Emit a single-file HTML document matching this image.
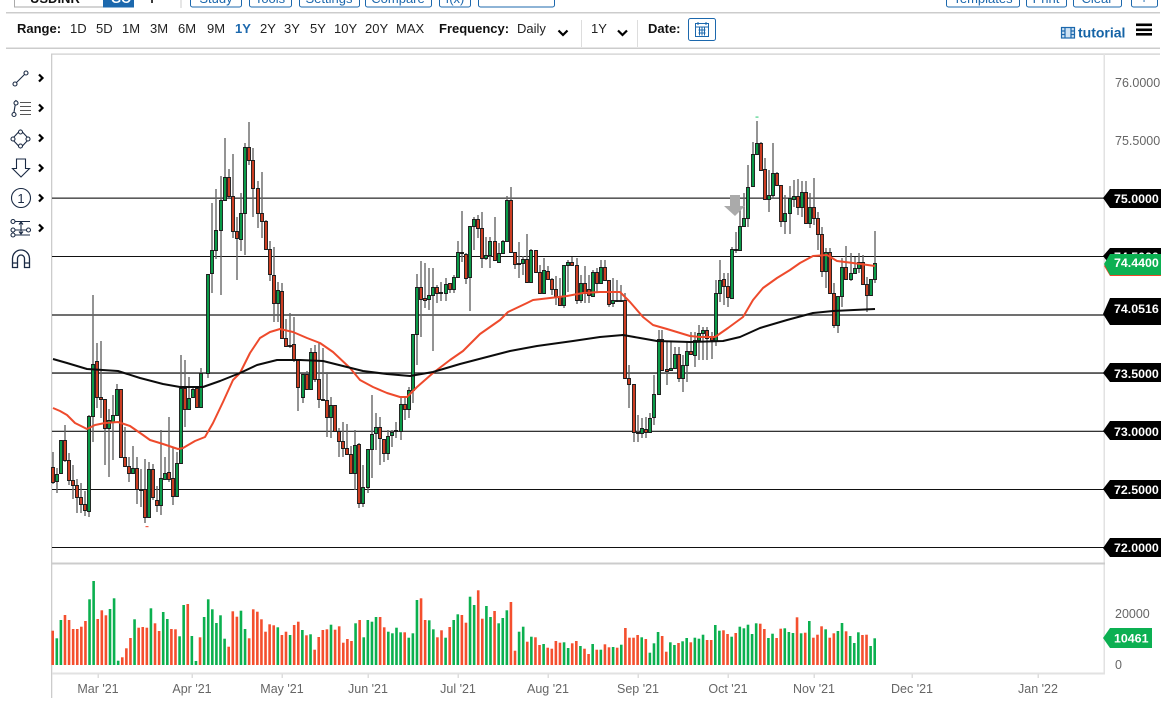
<!DOCTYPE html>
<html><head><meta charset="utf-8"><title>USDINR chart</title>
<style>
html,body{margin:0;padding:0;background:#fff;width:1173px;height:704px;overflow:hidden}
svg{position:absolute;left:0;top:0;display:block}
text{font-family:"Liberation Sans",Arial,sans-serif}
.t{font-size:13px;fill:#222}
.b{font-size:13px;font-weight:bold;fill:#111}
.tb{font-size:12.4px;font-weight:bold;fill:#fff}
.g{font-size:12.5px;fill:#666}
.btn{fill:#fff;stroke:#1c68ad;stroke-width:1}
.bt{font-size:13px;fill:#1c68ad}
.ic{fill:none;stroke:#1a2a44;stroke-width:1.1}
.ci{fill:#fff;stroke:#1a2a44;stroke-width:1.1}
.ch{fill:none;stroke:#000;stroke-width:2.2}
#cd,#ma{filter:blur(.35px)}
#vol{filter:blur(.2px)}
</style></head><body>
<svg width="1173" height="704" viewBox="0 0 1173 704" xmlns="http://www.w3.org/2000/svg">
<!-- top bar -->
<rect x="14.5" y="-10" width="89" height="17" class="btn" style="stroke:#aaa"/>
<text x="30" y="3" class="b">USDINR</text>
<rect x="103" y="-10" width="31" height="17.5" fill="#1c68ad"/>
<text x="111" y="3" style="font-size:13px;font-weight:bold;fill:#fff">GO</text>
<text x="152" y="4" text-anchor="middle" class="b" style="font-size:15px">+</text>
<rect x="180.5" y="-8" width="1" height="16" fill="#ccc"/>
<rect x="190.5" y="-10" width="51" height="17" rx="2" class="btn"/><text x="216" y="3" text-anchor="middle" class="bt">Study</text>
<rect x="249.5" y="-10" width="42" height="17" rx="2" class="btn"/><text x="270" y="3" text-anchor="middle" class="bt">Tools</text>
<rect x="299.5" y="-10" width="60" height="17" rx="2" class="btn"/><text x="329" y="3" text-anchor="middle" class="bt">Settings</text>
<rect x="365.5" y="-10" width="66" height="17" rx="2" class="btn"/><text x="398" y="3" text-anchor="middle" class="bt">Compare</text>
<rect x="439.5" y="-10" width="31" height="17" rx="2" class="btn"/><text x="455" y="3" text-anchor="middle" class="bt">f(x)</text>
<rect x="478.5" y="-10" width="76" height="17" rx="2" class="btn"/>
<rect x="946.5" y="-10" width="73" height="17" rx="2" class="btn"/><text x="983" y="3" text-anchor="middle" class="bt">Templates</text>
<rect x="1026.5" y="-10" width="40" height="17" rx="2" class="btn"/><text x="1046" y="3" text-anchor="middle" class="bt">Print</text>
<rect x="1073.5" y="-10" width="48" height="17" rx="2" class="btn"/><text x="1097" y="3" text-anchor="middle" class="bt">Clear</text>
<rect x="1131.5" y="-10" width="26" height="17" rx="2" class="btn"/><text x="1144" y="3" text-anchor="middle" class="bt">+</text>
<rect x="6" y="12" width="1154" height="1.5" fill="#ccc"/>
<rect x="6" y="47.5" width="1154" height="1.5" fill="#ccc"/>
<rect x="51" y="53.5" width="1109" height="1.2" fill="#ccc"/>
<!-- range row -->
<text x="17" y="33" class="b">Range:</text>
<text x="70" y="33" class="t">1D</text><text x="96" y="33" class="t">5D</text><text x="122" y="33" class="t">1M</text>
<text x="150" y="33" class="t">3M</text><text x="178" y="33" class="t">6M</text><text x="207" y="33" class="t">9M</text>
<text x="235" y="33" class="t" style="font-weight:bold;fill:#1c68ad">1Y</text>
<text x="260" y="33" class="t">2Y</text><text x="284" y="33" class="t">3Y</text><text x="310" y="33" class="t">5Y</text>
<text x="334" y="33" class="t">10Y</text><text x="365" y="33" class="t">20Y</text><text x="396" y="33" class="t">MAX</text>
<text x="439" y="33" class="b">Frequency:</text><text x="517" y="33" class="t">Daily</text>
<path d="M558.5 30.5l4.5 4.5 4.5-4.5" class="ch"/>
<rect x="581" y="20" width="1" height="27" fill="#ddd"/>
<text x="591" y="33" class="t">1Y</text>
<path d="M618 30.5l4.5 4.5 4.5-4.5" class="ch"/>
<rect x="637" y="20" width="1" height="27" fill="#ddd"/>
<text x="648" y="33" class="b">Date:</text>
<rect x="688.5" y="18.5" width="27" height="22" rx="2" class="btn"/>
<g fill="none" stroke="#1c68ad" stroke-width="1"><rect x="695.5" y="23.5" width="13" height="13"/><path d="M695.5 27h13M698 22v3M706 22v3M698.5 30h7M698.5 33h7M699.5 27.5v8M702 27.5v8M704.5 27.5v8"/></g>
<!-- tutorial -->
<g fill="none" stroke="#1c68ad" stroke-width="1.2"><rect x="1061.5" y="27.5" width="13" height="10.5" fill="#cfe3f4"/><path d="M1065 27.5v10.5M1071 27.5v10.5M1061.5 31h3.5M1061.5 34.5h3.5M1071 31h3.5M1071 34.5h3.5"/></g>
<text x="1078" y="37.500" style="font-size:14px;font-weight:bold;fill:#1463a6">tutorial</text>
<rect x="1136" y="23.500" width="16" height="2.600" fill="#000"/><rect x="1136" y="28.500" width="16" height="2.600" fill="#000"/><rect x="1136" y="33" width="16" height="2.600" fill="#000"/>
<!-- frame -->
<rect x="51" y="54" width="1.3" height="644" fill="#ccc"/>
<rect x="1103.5" y="54" width="1.5" height="620" fill="#e2e2e2"/>
<rect x="52" y="562.5" width="1053" height="2" fill="#ccc"/>
<rect x="52" y="672.5" width="1053" height="2" fill="#e2e2e2"/>
<!-- grid -->
<g fill="#333">
<rect x="52" y="197.5" width="1052" height="1.3"/><rect x="52" y="256" width="1052" height="1" fill="#111"/>
<rect x="52" y="314.3" width="1052" height="1.4"/><rect x="52" y="372.3" width="1052" height="1.5"/>
<rect x="52" y="430.7" width="1052" height="1.3"/><rect x="52" y="489" width="1052" height="1" fill="#111"/>
<rect x="52" y="547" width="1052" height="1" fill="#111"/></g>
<g id="cd"></g>
<g id="vol"></g>
<g id="ma">
<polyline fill="none" stroke="#ee4a2c" stroke-width="2" stroke-linejoin="round" points="53,408 60,411 67,415 75,423 87,429 95,425 105,423 118,422 130,426 143,435 150,440 163,444 178,449 183,448 195,441 205,437 213,423 223,402 233,380 240,373 250,353 260,338 270,332 280,329 293,332 307,338 320,343 333,352 350,368 360,380 373,387 387,393 400,397 407,397 417,387 433,373 450,360 463,351 480,334 500,320 508,312 527,303 533,300 550,298 567,296 583,293 600,292 620,292 630,302 643,317 653,325 667,329 690,336 700,337 715,337 728,328 743,317 753,300 763,288 777,278 790,270 800,263 813,256 827,255 837,261 853,263 875,266"/>
<polyline fill="none" stroke="#0c0c0c" stroke-width="2" stroke-linejoin="round" points="53,359 67,363 87,369 118,371 140,378 163,384 180,387 203,387 220,381 240,373 257,365 277,360 300,360 323,361 343,366 363,371 387,374 410,376 433,372 460,364 483,358 510,351 537,346 573,341 600,337 623,335 640,338 657,341 690,342 723,341 740,337 760,328 787,320 813,313 833,311 875,309"/>
<polygon points="730,195 740,195 740,206 745,206 735,216 724,206 730,206" fill="#aaa"/>
</g>
<rect x="755.5" y="116.5" width="3" height="1.2" fill="#4bd28a"/><rect x="145.5" y="526" width="3" height="1.2" fill="#f0604a"/>
<!-- ticks & x labels -->
<g fill="#ddd"><rect x="97.5" y="674" width="1.5" height="4"/><rect x="191.5" y="674" width="1.5" height="4"/><rect x="281.5" y="674" width="1.5" height="4"/><rect x="367.5" y="674" width="1.5" height="4"/><rect x="457.5" y="674" width="1.5" height="4"/><rect x="547.5" y="674" width="1.5" height="4"/><rect x="637.5" y="674" width="1.5" height="4"/><rect x="727.5" y="674" width="1.5" height="4"/><rect x="813.5" y="674" width="1.5" height="4"/><rect x="911.5" y="674" width="1.5" height="4"/><rect x="1037.5" y="674" width="1.5" height="4"/></g>
<g text-anchor="middle">
<text x="98" y="693" class="g">Mar '21</text><text x="192" y="693" class="g">Apr '21</text><text x="282" y="693" class="g">May '21</text><text x="368" y="693" class="g">Jun '21</text><text x="458" y="693" class="g">Jul '21</text><text x="548" y="693" class="g">Aug '21</text><text x="638" y="693" class="g">Sep '21</text><text x="728" y="693" class="g">Oct '21</text><text x="814" y="693" class="g">Nov '21</text><text x="912" y="693" class="g">Dec '21</text><text x="1038" y="693" class="g">Jan '22</text>
</g>
<!-- right axis -->
<text x="1115" y="87" class="g">76.0000</text><text x="1115" y="145" class="g">75.5000</text>
<g fill="#000">
<polygon points="1103,198 1110,189 1161,189 1161,208 1110,208"/>
<polygon points="1103,256 1110,248 1161,248 1161,265 1110,265"/>
<polygon points="1103,314 1110,298 1161,298 1161,325 1110,325"/>
<polygon points="1103,373 1110,363 1161,363 1161,382 1110,382"/>
<polygon points="1103,431 1110,421 1161,421 1161,440 1110,440"/>
<polygon points="1103,489 1110,480 1161,480 1161,499 1110,499"/>
<polygon points="1103,548 1110,538 1161,538 1161,557 1110,557"/></g>
<text x="1114" y="261" class="tb">74.5000</text>
<polygon points="1104,266 1110,257 1161,257 1161,276 1110,276" fill="#f0492b"/>
<polygon points="1104,264 1110,254 1161,254 1161,275 1110,275" fill="#0cb052"/>
<text x="1114" y="203" class="tb">75.0000</text>
<text x="1114" y="267" class="tb">74.4400</text>
<text x="1114" y="313" class="tb">74.0516</text>
<text x="1114" y="378" class="tb">73.5000</text>
<text x="1114" y="436" class="tb">73.0000</text>
<text x="1114" y="494" class="tb">72.5000</text>
<text x="1114" y="552" class="tb">72.0000</text>
<text x="1115" y="618" class="g">20000</text><text x="1115" y="669" class="g">0</text>
<polygon points="1103,638 1110,628 1152,628 1152,648 1110,648" fill="#0cb052"/>
<text x="1114" y="642.5" class="tb">10461</text>
<!-- left tools -->
<path d="M16.5 82.5L24.5 74.5" class="ic"/><circle cx="15" cy="84" r="2" class="ci"/><circle cx="26" cy="73" r="2" class="ci"/>
<path d="M16 100L14 112" class="ic"/><circle cx="16" cy="103" r="2" class="ci"/><circle cx="14" cy="114.5" r="2" class="ci"/><path d="M20 102.5h11M20 106.5h11M20 110.5h11M20 114.5h11" class="ic" style="stroke:#555"/>
<path d="M12 139l8.5-9 8.5 9-8.5 9z" class="ic"/><circle cx="20.5" cy="132" r="2" class="ci"/><circle cx="13" cy="139" r="2" class="ci"/><circle cx="28" cy="139" r="2" class="ci"/><circle cx="20.5" cy="146" r="2" class="ci"/>
<path d="M16.500 159h9v9.500h4l-8.500 8.500-8.500-8.500h4z" class="ic"/>
<circle cx="21" cy="198" r="9.5" class="ic"/><text x="21" y="203" text-anchor="middle" style="font-size:13px;fill:#1a2a44">1</text>
<path d="M14 221.5h16M14 235h16M21 222v12M19 224.500l2-2.500 2 2.500M19 231.500l2 2.500 2-2.500M15 230h13" class="ic"/><circle cx="13" cy="221.5" r="2" class="ci"/><circle cx="13" cy="230" r="2" class="ci"/><circle cx="13" cy="235" r="2" class="ci"/><circle cx="28.5" cy="230" r="2" class="ci"/>
<path d="M12.5 267.5v-9a8.500 8.500 0 0 1 17 0v9h-5v-9a3.500 3.500 0 0 0-7 0v9zM12.500 263h5M24.500 263h5" class="ic" style="stroke-width:1.3"/>
<path d="M39 74.500l3.500 3.500-3.500 3.500M39 104.500l3.500 3.500-3.500 3.500M39 134.500l3.500 3.500-3.500 3.500M39 164.500l3.500 3.500-3.500 3.500M39 194.500l3.500 3.500-3.500 3.500M39 224.500l3.500 3.500-3.500 3.500" class="ch"/>
</svg>
<script>
var C="53,467,482,452,484,r 57,474,481,468,493,g 61,440,473,440,474,g 65,440,460,425,462,r 69,460,480,453,485,r 73,480,485,465,499,r 77,485,497,479,513,r 81,497,504,483,513,r 85,504,510,491,516,r 89,416,511,415,517,g 93,364,416,295,442,g 97,361,397,343,408,r 101,397,399,341,418,r 105,399,428,399,465,r 109,420,428,409,477,g 113,415,422,395,460,g 117,389,415,384,415,g 121,389,457,389,457,r 125,457,466,427,466,r 129,466,473,457,482,r 133,468,473,446,473,g 137,468,489,457,504,r 141,489,490,469,507,r 145,489,517,459,523,r 149,469,517,462,517,g 153,469,497,464,500,r 157,500,505,486,512,r 161,478,505,430,515,g 165,473,479,457,480,g 169,472,479,417,482,r 173,478,496,447,505,r 177,463,496,452,496,g 181,388,463,355,463,g 185,388,409,360,427,r 189,398,409,377,409,g 193,389,397,387,397,g 197,388,407,387,408,r 201,373,407,368,407,g 208,274,373,274,378,g 212,250,273,203,293,g 216,230,250,189,259,g 221,200,230,176,295,g 225,177,200,138,200,g 229,177,196,169,198,r 233,196,231,154,238,r 237,231,238,217,280,r 241,213,239,193,251,g 245,147,213,143,255,g 249,147,160,122,165,r 253,160,188,148,217,r 258,188,213,181,228,r 262,213,221,172,238,r 266,221,249,220,249,r 270,249,274,241,281,r 274,275,303,247,322,r 278,290,303,282,322,g 282,291,338,283,338,r 286,338,346,319,346,r 290,345,346,313,348,r 294,344,360,317,362,r 298,360,387,360,411,r 303,374,397,374,403,g 307,374,389,371,389,r 311,352,389,348,389,g 315,352,379,345,382,r 319,379,399,343,408,r 323,399,400,348,400,r 327,400,417,372,437,r 331,405,417,397,438,g 335,405,431,405,431,r 339,431,441,428,457,r 343,441,448,422,457,r 347,448,454,424,454,r 351,454,473,446,473,r 355,445,473,430,490,g 359,444,503,443,508,r 363,487,503,465,507,g 368,449,487,449,493,g 372,434,449,395,478,g 376,427,433,413,450,g 380,427,438,417,465,r 384,439,453,439,462,r 388,436,453,430,460,g 392,432,435,430,447,g 396,430,431,422,438,g 401,404,431,397,440,g 405,404,409,398,420,r 409,390,409,387,418,g 413,334,390,334,403,g 417,287,334,274,365,g 421,287,299,261,337,r 425,298,300,263,308,r 429,295,299,268,310,g 433,287,295,268,351,g 437,287,293,285,303,r 441,292,293,282,301,r 446,284,293,278,301,g 450,283,289,283,293,r 454,277,289,275,293,g 458,252,277,241,277,g 462,252,253,211,262,r 466,254,278,253,284,r 470,226,277,226,311,g 474,219,226,217,250,g 478,219,228,215,238,r 482,228,258,212,268,r 486,255,258,237,260,g 490,241,255,237,268,g 495,241,260,217,260,r 499,253,262,243,262,g 503,241,253,240,253,g 507,200,241,196,241,g 511,200,252,187,252,r 515,252,264,252,269,r 519,263,264,242,278,r 523,259,263,256,275,g 527,259,282,234,282,r 531,250,282,249,282,g 536,250,272,250,272,r 540,272,293,265,293,r 544,270,293,258,293,g 548,271,279,266,279,r 552,279,289,278,295,r 556,289,296,276,305,r 560,296,305,278,305,r 564,265,305,265,308,g 568,262,265,260,292,g 572,262,265,257,265,r 577,265,300,258,304,r 581,283,300,275,303,g 585,283,293,266,303,r 589,289,295,275,303,r 593,272,296,270,297,g 597,272,283,268,293,r 601,267,283,260,283,g 605,267,280,260,280,r 609,280,304,280,307,r 613,300,303,278,307,g 617,300,301,280,302,g 621,300,301,285,301,g 625,300,378,293,378,r 629,378,384,365,408,r 634,384,432,384,442,r 638,432,433,415,442,r 642,428,433,418,438,g 646,429,432,417,438,r 650,418,432,413,432,g 654,394,417,375,425,g 659,339,394,330,394,g 662,339,370,330,370,r 667,369,371,342,385,r 671,368,370,342,370,g 675,354,368,347,368,g 679,354,378,347,382,r 683,365,378,355,392,g 687,351,365,342,382,g 691,351,354,332,354,r 695,340,355,332,367,g 699,333,340,325,360,g 703,330,333,327,360,g 707,330,338,327,360,r 712,337,340,332,359,r 716,293,341,280,346,g 720,280,293,260,302,g 724,279,286,273,305,r 728,286,297,273,307,r 732,249,298,247,299,g 736,249,250,232,253,g 740,226,250,210,250,g 744,218,226,193,226,g 748,187,218,165,227,g 753,154,186,142,186,g 757,143,154,121,154,g 761,143,170,142,170,r 765,169,199,158,199,r 769,195,199,170,212,g 773,173,195,143,199,g 777,173,185,172,185,r 781,185,221,185,227,r 785,213,221,195,234,g 790,198,213,186,234,g 794,196,199,180,207,g 798,196,207,179,215,r 802,192,207,181,217,g 806,192,223,181,223,r 810,207,223,193,228,g 814,207,218,178,225,r 818,218,234,212,250,r 822,234,271,227,277,r 826,252,271,248,288,g 830,252,293,248,293,r 834,293,325,283,328,r 838,296,325,296,333,g 842,267,296,258,307,g 846,267,279,246,279,r 851,273,279,253,281,g 855,268,273,257,273,g 859,262,268,253,273,g 863,262,284,255,285,r 867,284,295,277,312,r 871,279,295,279,295,g 875,263,279,231,283,g".split(" ");
var s="",w="",gb="",rb="";
C.forEach(function(c){var a=c.split(","),x=+a[0],t=+a[1],b=+a[2],h=+a[3],l=+a[4];
w+="M"+x+" "+h+"V"+l;
var d="M"+(x-1.5)+" "+(t+.5)+"h3v"+Math.max(1,b-t)+"h-3z";
if(a[5]=="g")gb+=d;else rb+=d;});
s='<path d="'+w+'" stroke="#666" stroke-width="1.4" fill="none"/><path d="'+gb+'" fill="#0a9a48" stroke="#1a1a1a" stroke-width=".9"/><path d="'+rb+'" fill="#cc3d22" stroke="#1a1a1a" stroke-width=".9"/>';
document.getElementById("cd").innerHTML=s;
function vb(str,x0,dx){var o="";str.split(" ").forEach(function(v,i){var top=560+ +v.slice(1)/3,x=x0+i*dx;
o+='<rect x="'+(x-1.3).toFixed(2)+'" y="'+top.toFixed(1)+'" width="2.6" height="'+(665-top).toFixed(1)+'" fill="'+(v[0]=="g"?"#0bb04f":"#f44f2e")+'"/>';});return o;}
var A="r212 g235 g180 r165 r180 r207 r207 r200 r183 g118 g63 r177 r151 r166 g147 g115 g302 r292 r265 r234 g178 r203 r201 r203 g145 r190 r213 g156 g177 r207 r208 g229 g135 r132 g228 g303 r232 g171 g118 g148 g189 g166 g236 r260 r154 r170 g152 g207 r235 r148 r155 r178 r215 r193 r196 g202 r225 r215 g225 r195 r185 g210 r226 g223 r269 r231 r210 r208 g194 r209 r199 r248 r237 r243 g190 r180 g232 g180 g185 g171 r171 r202 g215 g220 g203 g217 r217 g233 g220 g120 r115 r180 g181 g208 r232 r211 g233 r201";
var B="g180 g163 r165 r188 g110 g135 r91 r176 g138 g171 r153 g190 g174 g151 r126 r272 g215 g200 r245 g230 r232 r255 g252 r263 r266 r243 r248 g247 g264 r250 r243 g258 r266 r282 g252 r269 g269 r253 r262 g261 r263 g254 r204 r233 r233 r225 g232 r237 g278 g250 g216 r228 r275 g247 g255 r249 g244 g234 r247 g233 g236 g224 r240 r240 g195 g212 r211 r222 g230 r219 g200 g205 g194 g222 g190 r191 r207 g234 g221 r234 r206 g205 g216 g219 r172 g220 r218 g183 r233 r224 r199 g208 r233 r220 g213 g189 r214 g228 g249 g217 r225 r224 g258 g235";
document.getElementById("vol").innerHTML=vb(A,52.7,(449.7-52.7)/(A.split(" ").length-1))+vb(B,453.7,(874.7-453.7)/(B.split(" ").length-1));
</script>
</body></html>
